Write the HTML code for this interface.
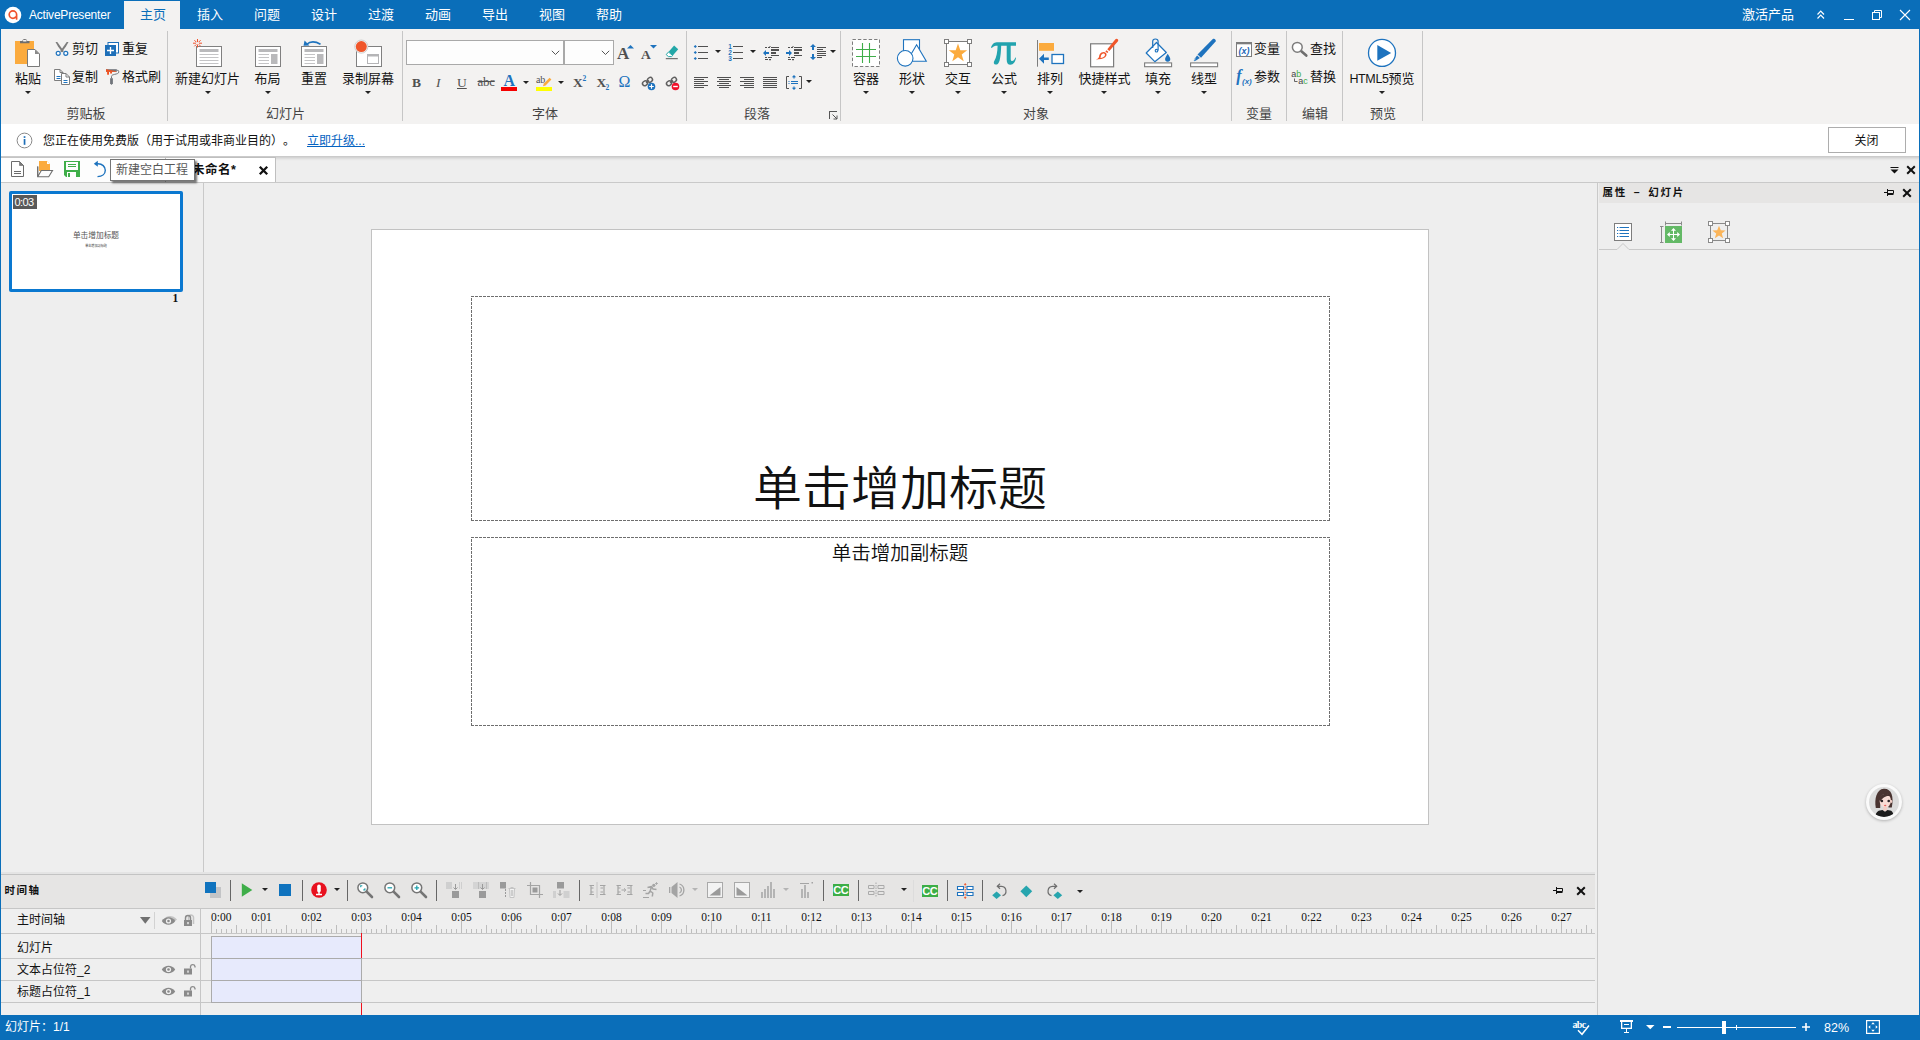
<!DOCTYPE html>
<html lang="zh-CN">
<head>
<meta charset="utf-8">
<title>ActivePresenter</title>
<style>
*{box-sizing:border-box;margin:0;padding:0}
html,body{width:1920px;height:1040px;overflow:hidden;background:#eeeeee}
body{position:relative;font-family:"Liberation Sans","Noto Sans CJK SC",sans-serif;font-size:13px;color:#141414;line-height:1}
.abs,.abs *{position:absolute}
#app{position:absolute;left:0;top:0;width:1920px;height:1040px;overflow:hidden}
.t{position:absolute;white-space:nowrap;line-height:16px;height:16px}
.c{transform:translateX(-50%)}
svg{position:absolute;overflow:visible}
/* title bar */
#titlebar{position:absolute;left:0;top:0;width:1920px;height:29px;background:#0a6eb9}
#titlebar .t{color:#fff}
#tabhome{position:absolute;left:124px;top:1px;width:56px;height:28px;background:#f3f2f1}
/* ribbon */
#ribbon{position:absolute;left:1px;top:29px;width:1918px;height:95px;background:#f3f2f1}
.sep{position:absolute;top:31px;width:1px;height:90px;background:#c6c6c6}
.gl{color:#444}
.arr{position:absolute;width:0;height:0;border-left:3px solid transparent;border-right:3px solid transparent;border-top:3px solid #222}
.sf{font-family:"Liberation Serif","Noto Serif CJK SC",serif}
.dash{background:
 repeating-linear-gradient(90deg,#6e6e6e 0 3px,transparent 3px 4px) 0 0/100% 1px no-repeat,
 repeating-linear-gradient(90deg,#6e6e6e 0 3px,transparent 3px 4px) 0 100%/100% 1px no-repeat,
 repeating-linear-gradient(180deg,#6e6e6e 0 3px,transparent 3px 4px) 0 2px/1px 100% no-repeat,
 repeating-linear-gradient(180deg,#6e6e6e 0 3px,transparent 3px 4px) 100% 2px/1px 100% no-repeat}
.vs{position:absolute;top:880px;width:1px;height:21px;background:#666}
/* info */
#info{position:absolute;left:1px;top:124px;width:1918px;height:32px;background:#fff}
#infoshadow{position:absolute;left:1px;top:156px;width:1918px;height:5px;background:linear-gradient(#cbcbcb 0 1px,#d4d4d4 1px 2px,#dedede 2px 3px,#e7e7e7 3px 4px,#ececec 4px 5px)}
/* borders */
#lb{position:absolute;left:0;top:0;width:1px;height:1040px;background:#0a6eb9}
#rb{position:absolute;left:1919px;top:0;width:1px;height:1040px;background:#0a6eb9}
#status{position:absolute;left:0;top:1015px;width:1920px;height:25px;background:#0a6eb9}
#status .t{color:#fff}
</style>
</head>
<body>
<div id="app">
<!-- TITLE BAR -->
<div id="titlebar">
  <svg style="left:4px;top:6px" width="18" height="18" viewBox="0 0 18 18">
    <circle cx="9" cy="9" r="8.3" fill="#fff"/>
    <path d="M12.6 12.9 V8.6 A3.7 3.7 0 1 0 8.9 12.3 A3.6 3.6 0 0 0 11.6 11.1" fill="none" stroke="#f0522d" stroke-width="1.7" stroke-linecap="round"/>
  </svg>
  <div class="t" style="left:29px;top:7px;font-size:12px;letter-spacing:-0.22px">ActivePresenter</div>
  <div id="tabhome"></div>
  <div class="t" style="left:140px;top:7px;color:#0a6eb9">主页</div>
  <div class="t" style="left:197px;top:7px">插入</div>
  <div class="t" style="left:254px;top:7px">问题</div>
  <div class="t" style="left:311px;top:7px">设计</div>
  <div class="t" style="left:368px;top:7px">过渡</div>
  <div class="t" style="left:425px;top:7px">动画</div>
  <div class="t" style="left:482px;top:7px">导出</div>
  <div class="t" style="left:539px;top:7px">视图</div>
  <div class="t" style="left:596px;top:7px">帮助</div>
  <div class="t" style="left:1742px;top:7px">激活产品</div>
  <svg style="left:1816px;top:9px" width="10" height="11" viewBox="0 0 10 11" fill="none" stroke="#fff" stroke-width="1.2">
    <path d="M1.500 5.500 L4.750 2.200 L8 5.500 M1.500 9.500 L4.750 6.200 L8 9.500"/>
  </svg>
  <div style="position:absolute;left:1844px;top:19px;width:10px;height:1px;background:#fff"></div>
  <svg style="left:1872px;top:10px" width="10" height="10" viewBox="0 0 10 10" fill="none" stroke="#fff" stroke-width="1">
    <rect x="0.5" y="2.5" width="7" height="7"/><path d="M2.5 2.5 V0.5 H9.5 V7.5 H7.5"/>
  </svg>
  <svg style="left:1900px;top:10px" width="10" height="10" viewBox="0 0 10 10" fill="none" stroke="#fff" stroke-width="1.1">
    <path d="M0 0 L10 10 M10 0 L0 10"/>
  </svg>
</div>
<!-- RIBBON -->
<div id="ribbon"></div>
<div id="rib" class="abs" style="left:0;top:0;width:1920px;height:124px">
  <!-- clipboard group -->
  <svg style="left:14px;top:38px" width="28" height="30" viewBox="0 0 28 30">
    <rect x="1" y="3" width="19" height="23" fill="#fbab3e"/>
    <path d="M6 5.300 h9.500 v-2.300 h-2.200 a2.600 2.400 0 0 0 -5.100 0 h-2.200 z" fill="#6e6e6e"/>
    <rect x="8.800" y="1.900" width="3.900" height="1.500" rx="0.750" fill="#f3f2f1"/>
    <path d="M13.500 11.500 h7.500 l4.500 4.500 v12.500 h-12 z" fill="#fff" stroke="#7a7a7a" stroke-width="1"/>
    <path d="M21 11.500 v4.500 h4.500 z" fill="#8a8a8a"/>
  </svg>
  <div class="t c" style="left:28px;top:71px">粘贴</div>
  <div class="arr" style="left:25px;top:91px"></div>

  <svg style="left:55px;top:42px" width="14" height="14" viewBox="0 0 14 14">
    <path d="M0.500 0 L2.300 0 L8.900 9.300 L7.300 10.300 L3 4.500 Z" fill="#7d7d7d"/>
    <path d="M13.500 0 L11.700 0 L5.100 9.300 L6.700 10.300 L11 4.500 Z" fill="#7d7d7d"/>
    <circle cx="3.2" cy="11.3" r="2" fill="#fff" stroke="#1e73be" stroke-width="1.2"/>
    <circle cx="10.8" cy="11.3" r="2" fill="#fff" stroke="#1e73be" stroke-width="1.2"/>
  </svg>
  <div class="t" style="left:72px;top:41px">剪切</div>
  <svg style="left:105px;top:42px" width="14" height="14" viewBox="0 0 14 14">
    <rect x="3" y="0.5" width="10.5" height="10.5" fill="#fff" stroke="#1e6fb8" stroke-width="1"/>
    <rect x="0" y="3" width="11" height="11" fill="#1e6fb8"/>
    <path d="M5.5 5 v7 M2 8.5 h7" stroke="#fff" stroke-width="1.3"/>
  </svg>
  <div class="t" style="left:122px;top:41px">重复</div>
  <svg style="left:54px;top:69px" width="16" height="16" viewBox="0 0 16 16">
    <path d="M0.5 0.5 h5.5 l3 3 v8 h-8.5 z" fill="#fff" stroke="#7d7d7d"/>
    <path d="M6 0.5 v3 h3" fill="none" stroke="#7d7d7d"/>
    <path d="M2.5 7.5 h4 M2.5 9.5 h4" stroke="#1e73be" stroke-width="1"/>
    <path d="M7.5 4.5 h4.5 l3.5 3.5 v7.5 h-8 z" fill="#fff" stroke="#7d7d7d"/>
    <path d="M12 4.5 v3.5 h3.5" fill="none" stroke="#7d7d7d"/>
    <path d="M9.5 11.5 h4 M9.5 13.5 h4" stroke="#1e73be" stroke-width="1"/>
  </svg>
  <div class="t" style="left:72px;top:68.5px">复制</div>
  <svg style="left:106px;top:69px" width="14" height="16" viewBox="0 0 14 16">
    <rect x="0" y="0.200" width="10.800" height="2.600" fill="#70747a"/>
    <path d="M0 0.200 L10.300 2.200 V2.800 H0 Z" fill="#f4511e"/>
    <rect x="1.100" y="2.700" width="1.900" height="3" fill="#f4511e"/><rect x="4.100" y="2.700" width="1.900" height="1.800" fill="#f4511e"/>
    <path d="M10.800 1.400 H11.700 A1 1 0 0 1 12.700 2.400 V3.200 C12.700 4.500 11 4.800 8.500 5.400 C6.500 5.900 5.500 6.300 5.500 7.500 V9.400" fill="none" stroke="#70747a" stroke-width="1"/>
    <path d="M4.100 9.300 H6.900 V14.300 L5.500 15.900 L4.100 14.300 Z" fill="#70747a"/>
  </svg>
  <div class="t" style="left:122px;top:68.5px">格式刷</div>
  <div class="t c gl" style="left:86px;top:106px">剪贴板</div>
  <div class="sep" style="left:167px"></div>

  <!-- slides group -->
  <svg style="left:192px;top:38px" width="32" height="30" viewBox="0 0 32 30">
    <rect x="4.5" y="8.5" width="25" height="20" fill="#fff" stroke="#808080"/>
    <rect x="7.5" y="11" width="19" height="3" fill="#b9b9bb"/>
    <path d="M7.5 16.5 h19 M7.5 19.5 h19 M7.5 22.5 h19 M7.5 25.5 h19" stroke="#c4c4c6" stroke-width="1"/>
    <g stroke="#f0522d" stroke-width="1">
      <path d="M5.5 1 v3 M5.5 6.5 v3 M1 5.2 h3 M7 5.2 h3 M2.4 2.2 l2 2 M6.8 6.4 l1.8 1.8 M8.6 2.2 l-2 2 M4.3 6.4 l-1.9 1.9"/>
    </g>
  </svg>
  <div class="t c" style="left:207.5px;top:71px">新建幻灯片</div>
  <div class="arr" style="left:205px;top:91px"></div>

  <svg style="left:254px;top:38px" width="28" height="30" viewBox="0 0 28 30">
    <rect x="1.5" y="8.5" width="25" height="20" fill="#fff" stroke="#808080"/>
    <rect x="4.5" y="11" width="19" height="3" fill="#b9b9bb"/>
    <path d="M4.5 16.5 h10.5 M4.5 19.5 h10.5 M4.5 22.5 h10.5 M4.5 25.5 h10.5" stroke="#c4c4c6" stroke-width="1"/>
    <rect x="17" y="16" width="6.5" height="10" fill="#b9b9bb"/>
  </svg>
  <div class="t c" style="left:267.5px;top:71px">布局</div>
  <div class="arr" style="left:265px;top:91px"></div>

  <svg style="left:300px;top:38px" width="28" height="30" viewBox="0 0 28 30">
    <rect x="1.5" y="8.5" width="25" height="20" fill="#fff" stroke="#808080"/>
    <rect x="4.5" y="11" width="19" height="3" fill="#b9b9bb"/>
    <path d="M4.5 16.5 h10.5 M4.5 19.5 h10.5 M4.5 22.5 h10.5 M4.5 25.5 h10.5" stroke="#c4c4c6" stroke-width="1"/>
    <rect x="17" y="16" width="6.5" height="10" fill="#b9b9bb"/>
    <path d="M6.5 6.5 Q12 1.5 20.5 6.2" fill="none" stroke="#1e73be" stroke-width="1.6"/>
    <path d="M3.5 7.8 L4.6 2.6 L9.4 7.6 Z" fill="#1e73be"/>
  </svg>
  <div class="t c" style="left:314px;top:71px">重置</div>

  <svg style="left:352px;top:38px" width="32" height="30" viewBox="0 0 32 30">
    <rect x="4.5" y="8.5" width="25" height="20" fill="#fff" stroke="#808080"/>
    <rect x="15.5" y="16.5" width="11" height="9" fill="#fff" stroke="#b5b5b7"/>
    <rect x="15.5" y="16.500" width="11" height="2" fill="#b5b5b7"/>
    <circle cx="9.3" cy="8.6" r="6.6" fill="#f3f2f1" stroke="#c8c8c8" stroke-width="0.8"/>
    <circle cx="9.3" cy="8.6" r="5.5" fill="#f0562a"/>
  </svg>
  <div class="t c" style="left:368px;top:71px">录制屏幕</div>
  <div class="arr" style="left:365px;top:91px"></div>
  <div class="t c gl" style="left:285.5px;top:106px">幻灯片</div>
  <div class="sep" style="left:402px"></div>
  <!-- font group -->
  <div style="left:406px;top:40px;width:158px;height:25px;background:#fdfdfd;border:1px solid #a9a9a9"></div>
  <div style="left:564px;top:40px;width:50px;height:25px;background:#fdfdfd;border:1px solid #a9a9a9"></div>
  <svg style="left:551px;top:50px" width="9" height="6" viewBox="0 0 9 6" fill="none" stroke="#555" stroke-width="1"><path d="M0.8 0.8 L4.5 4.5 L8.2 0.8"/></svg>
  <svg style="left:601px;top:50px" width="9" height="6" viewBox="0 0 9 6" fill="none" stroke="#555" stroke-width="1"><path d="M0.8 0.8 L4.5 4.5 L8.2 0.8"/></svg>
  <div class="t sf" style="left:617px;top:46px;font-size:17px;font-weight:bold;color:#505050">A</div>
  <svg style="left:627px;top:45px" width="7" height="4" viewBox="0 0 7 4"><path d="M0 3.5 L3.5 0 L7 3.5 Z" fill="#1e73be"/></svg>
  <div class="t sf" style="left:641px;top:47px;font-size:13.5px;font-weight:bold;color:#505050">A</div>
  <svg style="left:650px;top:45px" width="7" height="4" viewBox="0 0 7 4"><path d="M0 0 L7 0 L3.5 3.5 Z" fill="#1e73be"/></svg>
  <svg style="left:665px;top:45px" width="15" height="15" viewBox="0 0 15 15">
    <path d="M7.5 1.2 L11.6 4.9 L6.2 11 L2.1 7.3 Z" fill="#22a7a7" transform="translate(1.6,-0.6)"/>
    <path d="M3.5 7 L1.2 9.6 L3.4 11.6 H6.5 L7.7 10.6 Z" fill="#fff" stroke="#22a7a7" stroke-width="1"/>
    <path d="M0.8 13.7 H12.8" stroke="#555" stroke-width="1"/>
  </svg>

  <div class="t sf" style="left:412px;top:75px;font-size:13.5px;font-weight:bold;color:#505050">B</div>
  <div class="t sf" style="left:436px;top:75px;font-size:13.5px;font-style:italic;color:#505050">I</div>
  <div class="t sf" style="left:457px;top:75px;font-size:13.5px;color:#505050;text-decoration:underline;text-underline-offset:1px">U</div>
  <div class="t sf" style="left:477.5px;top:74px;font-size:13px;color:#505050;text-decoration:line-through;letter-spacing:-0.3px">abc</div>
  <div class="t sf" style="left:503.500px;top:73px;font-size:16px;font-weight:bold;color:#1e73be">A</div>
  <div style="left:501px;top:87px;width:16px;height:4px;background:#f50000"></div>
  <div class="arr" style="left:523px;top:81px"></div>
  <div class="t sf" style="left:536px;top:71.500px;font-size:10px;color:#505050;letter-spacing:-0.3px">ab</div>
  <svg style="left:542px;top:77px" width="10" height="10" viewBox="0 0 10 10"><path d="M1 9.2 L1.8 6.6 L7.6 0.8 L9.4 2.6 L3.6 8.4 Z" fill="#fbab3e"/></svg>
  <div style="left:536px;top:87px;width:16px;height:4px;background:#ffff00"></div>
  <div class="arr" style="left:558px;top:81px"></div>
  <div class="t sf" style="left:573px;top:75px;font-size:13.5px;font-weight:bold;color:#505050">X</div>
  <div class="t sf" style="left:582.5px;top:71px;font-size:7.5px;font-weight:bold;color:#1e73be">2</div>
  <div class="t sf" style="left:596.5px;top:75px;font-size:13.5px;font-weight:bold;color:#505050">X</div>
  <div class="t sf" style="left:605.5px;top:79.500px;font-size:7.5px;font-weight:bold;color:#1e73be">2</div>
  <div class="t sf" style="left:618.5px;top:74px;font-size:16px;color:#1e73be">Ω</div>
  <svg style="left:641px;top:76px" width="15" height="15" viewBox="0 0 15 15">
    <g fill="none" stroke="#606060" stroke-width="1.5"><ellipse cx="4" cy="7.3" rx="2.6" ry="2.2" transform="rotate(-35 4 7.3)"/><ellipse cx="9" cy="3.8" rx="2.6" ry="2.2" transform="rotate(-35 9 3.8)"/><path d="M5 6.6 L8 4.5"/></g>
    <circle cx="10.5" cy="10.5" r="3.8" fill="#1e73be"/><path d="M10.5 8.2 v4.6 M8.2 10.5 h4.6" stroke="#fff" stroke-width="1.2"/>
  </svg>
  <svg style="left:665px;top:76px" width="15" height="15" viewBox="0 0 15 15">
    <g fill="none" stroke="#606060" stroke-width="1.5"><ellipse cx="4" cy="7.3" rx="2.6" ry="2.2" transform="rotate(-35 4 7.3)"/><ellipse cx="9" cy="3.8" rx="2.6" ry="2.2" transform="rotate(-35 9 3.8)"/><path d="M5 6.6 L8 4.5"/></g>
    <circle cx="10.5" cy="10.5" r="3.8" fill="#f0102a"/><path d="M8.2 10.5 h4.6" stroke="#fff" stroke-width="1.4"/>
  </svg>
  <div class="t c gl" style="left:545px;top:106px">字体</div>
  <div class="sep" style="left:686px"></div>

  <!-- paragraph group -->
  <svg style="left:693px;top:44px" width="16" height="17" viewBox="0 0 16 17">
    <path d="M5 2.5 h10 M5 8.5 h10 M5 14.5 h10" stroke="#505050" stroke-width="1"/>
    <path d="M2.3 0.9 l1.6 1.6 l-1.6 1.6 l-1.6 -1.6 z M2.3 6.9 l1.6 1.6 l-1.6 1.6 l-1.6 -1.6 z M2.3 12.9 l1.6 1.6 l-1.6 1.6 l-1.6 -1.6 z" fill="#1e73be"/>
  </svg>
  <div class="arr" style="left:715px;top:50px"></div>
  <svg style="left:728px;top:44px" width="16" height="17" viewBox="0 0 16 17">
    <path d="M5 2.5 h10 M5 8.5 h10 M5 14.5 h10" stroke="#505050" stroke-width="1"/>
    <g font-family="Liberation Sans, sans-serif" font-size="6.5" font-weight="bold" fill="#1e73be"><text x="0.3" y="4.8">1</text><text x="0.3" y="10.8">2</text><text x="0.3" y="16.6">3</text></g>
  </svg>
  <div class="arr" style="left:750px;top:50px"></div>
  <svg style="left:763px;top:45px" width="17" height="17" viewBox="0 0 17 17">
    <path d="M2 2.500 h2 M5 2.500 h2 M8 2.500 h8 M2 12.500 h2 M5 12.500 h4 M2 14.500 h3 M6 14.500 h2" stroke="#505050" stroke-width="1"/>
    <path d="M8 5 h8 M8 8 h5" stroke="#505050" stroke-width="2"/>
    <path d="M8 10.500 h8" stroke="#505050" stroke-width="1"/>
    <path d="M7 1 v1 M7 14 v1.500" stroke="#505050" stroke-width="1"/>
    <path d="M0 8 L3 5 V7 H6 V9 H3 V11 Z" fill="#1e73be"/>
  </svg>
  <svg style="left:786px;top:45px" width="17" height="17" viewBox="0 0 17 17">
    <path d="M2 2.500 h2 M5 2.500 h2 M8 2.500 h8 M2 12.500 h2 M5 12.500 h4 M2 14.500 h3 M6 14.500 h2" stroke="#505050" stroke-width="1"/>
    <path d="M8 5 h8 M8 8 h5" stroke="#505050" stroke-width="2"/>
    <path d="M8 10.500 h8" stroke="#505050" stroke-width="1"/>
    <path d="M7 1 v1 M7 14 v1.500" stroke="#505050" stroke-width="1"/>
    <path d="M6 8 L3 5 V7 H0 V9 H3 V11 Z" fill="#1e73be"/>
  </svg>
  <svg style="left:810px;top:44px" width="17" height="17" viewBox="0 0 17 17">
    <path d="M7 3.500 h9 M7 5.500 h6 M7 7.500 h9 M7 9.500 h9 M7 11.500 h9 M7 13.500 h5" stroke="#505050" stroke-width="1"/>
    <path d="M3 0 L6 3 H4 V6 H2 V3 H0 Z M3 16 L6 13 H4 V10 H2 V13 H0 Z" fill="#1e73be"/>
  </svg>
  <div class="arr" style="left:830px;top:50px"></div>

  <svg style="left:694px;top:77px" width="14" height="11" viewBox="0 0 14 11"><path d="M0 0.500 h14 M0 2.500 h10 M0 4.500 h14 M0 6.500 h10 M0 8.500 h14 M0 10.500 h10" stroke="#505050" stroke-width="1"/></svg>
  <svg style="left:717px;top:77px" width="14" height="11" viewBox="0 0 14 11"><path d="M0 0.500 h14 M2 2.500 h10 M0 4.500 h14 M2 6.500 h10 M0 8.500 h14 M2 10.500 h10" stroke="#505050" stroke-width="1"/></svg>
  <svg style="left:740px;top:77px" width="14" height="11" viewBox="0 0 14 11"><path d="M0 0.500 h14 M4 2.500 h10 M0 4.500 h14 M4 6.500 h10 M0 8.500 h14 M4 10.500 h10" stroke="#505050" stroke-width="1"/></svg>
  <svg style="left:763px;top:77px" width="14" height="11" viewBox="0 0 14 11"><path d="M0 0.500 h14 M0 2.500 h14 M0 4.500 h14 M0 6.500 h14 M0 8.500 h14 M0 10.500 h14" stroke="#505050" stroke-width="1"/></svg>
  <svg style="left:786px;top:74px" width="16" height="17" viewBox="0 0 16 17">
    <path d="M3 2.500 H0.500 V14.500 H3 M13 2.500 H15.500 V14.500 H13" fill="none" stroke="#505050" stroke-width="1"/>
    <path d="M5 7.500 h7 M5 9.500 h7 M2.500 7.500 h1 M2.500 9.500 h1" stroke="#1e73be" stroke-width="1"/>
    <path d="M8 1 L10.200 3.300 H8.600 V4.500 H7.400 V3.300 H5.800 Z M8 16 L10.200 13.700 H8.600 V12.500 H7.400 V13.700 H5.800 Z" fill="#1e73be"/>
  </svg>
  <div class="arr" style="left:806px;top:80px"></div>
  <div class="t c gl" style="left:757px;top:106px">段落</div>
  <svg style="left:829px;top:111px" width="9" height="9" viewBox="0 0 9 9" fill="none" stroke="#555" stroke-width="1"><path d="M0.500 3 V0.500 H3 M3.500 3.500 L8 8 M8 4.500 V8 H4.500"/><path d="M0.500 0.500 H8 M0.500 0.500 V8" stroke-width="1"/></svg>
  <div class="sep" style="left:840px"></div>
  <!-- object group -->
  <svg style="left:852px;top:39px" width="28" height="28" viewBox="0 0 28 28">
    <rect x="0.5" y="0.5" width="27" height="27" fill="#fff" stroke="#7d7d7d" stroke-width="1" stroke-dasharray="3.4 2"/>
    <path d="M10.500 4 v20 M17.500 4 v20 M4 10.500 h20 M4 17.500 h20" stroke="#3fae49" stroke-width="1.1"/>
  </svg>
  <div class="t c" style="left:866px;top:71px">容器</div>
  <div class="arr" style="left:863px;top:91px"></div>

  <svg style="left:896px;top:39px" width="32" height="28" viewBox="0 0 32 28">
    <rect x="7.5" y="0.7" width="16" height="14" fill="#fff" stroke="#1e73be" stroke-width="1.1"/>
    <path d="M20.600 5.800 L30.300 22.200 H11 Z" fill="#fff" stroke="#1e73be" stroke-width="1.1" stroke-linejoin="miter"/>
    <circle cx="9.200" cy="19.300" r="7.800" fill="#fff" stroke="#1e73be" stroke-width="1.1"/>
  </svg>
  <div class="t c" style="left:912px;top:71px">形状</div>
  <div class="arr" style="left:909px;top:91px"></div>

  <svg style="left:944px;top:39px" width="28" height="28" viewBox="0 0 28 28">
    <rect x="2.5" y="2.5" width="23" height="23" fill="#fff" stroke="#7d7d7d" stroke-width="1"/>
    <g fill="#fff" stroke="#7d7d7d" stroke-width="1"><rect x="0.5" y="0.5" width="4" height="4"/><rect x="23.500" y="0.5" width="4" height="4"/><rect x="0.5" y="23.500" width="4" height="4"/><rect x="23.500" y="23.500" width="4" height="4"/></g>
    <path d="M14 4.600 L16.300 11.200 L23.200 11.300 L17.700 15.500 L19.700 22.200 L14 18.200 L8.300 22.200 L10.300 15.500 L4.800 11.300 L11.700 11.200 Z" fill="#fbab3e"/>
  </svg>
  <div class="t c" style="left:958px;top:71px">交互</div>
  <div class="arr" style="left:955px;top:91px"></div>

  <svg style="left:990px;top:39px" width="28" height="28" viewBox="0 0 28 28">
    <path d="M1 8.500 C2.500 4.500 4.500 3.300 8 3.300 H26 V6.700 H20.700 V20 C20.700 22.200 22.300 22.700 23.800 21.300 C24.500 20.600 25 19.600 25.300 18.600 L26 18.800 C25.500 23 23.300 25.700 20.500 25.700 C17.800 25.700 16.700 23.700 16.700 20.700 V6.700 H11.200 C11 12 10.600 17.500 9.600 21.500 C8.800 24.600 7.200 25.800 5.600 25.600 C3.700 25.400 3.300 23.400 4.400 21.700 C6.400 18.500 7.500 13 7.600 6.700 C4.800 6.700 3.300 7.200 1.800 9 Z" fill="#22a3ae"/>
  </svg>
  <div class="t c" style="left:1004px;top:71px">公式</div>
  <div class="arr" style="left:1001px;top:91px"></div>

  <svg style="left:1036px;top:39px" width="29" height="28" viewBox="0 0 29 28">
    <path d="M1.500 1 V27.700" stroke="#7d7d7d" stroke-width="1"/>
    <rect x="3" y="4" width="15" height="7.800" fill="#fbab3e"/>
    <rect x="16" y="15.500" width="11.500" height="9" fill="#fff" stroke="#1e73be" stroke-width="1.3"/>
    <path d="M3 19.700 L8 14.700 V18.400 H12.800 V21 H8 V24.700 Z" fill="#1e73be"/>
  </svg>
  <div class="t c" style="left:1050px;top:71px">排列</div>
  <div class="arr" style="left:1047px;top:91px"></div>

  <svg style="left:1089px;top:38px" width="30" height="30" viewBox="0 0 30 30">
    <rect x="1.600" y="5.800" width="23" height="23" fill="#fff" stroke="#7d7d7d" stroke-width="1.200"/>
    <path d="M27.500 0.800 C28.700 0.800 29.800 2 29 3.200 L20.300 13 L18.300 11.200 L26.200 1.400 C26.500 1 27 0.800 27.500 0.800 Z" fill="#f0562a"/>
    <path d="M17.500 12.200 L19.400 13.900 L18.300 15.100 L16.400 13.400 Z" fill="#f0562a"/>
    <path d="M15.600 14.200 C17.300 14.600 18 16.200 17.300 17.800 C16.300 20.200 13 21.300 9.300 21.200 C8.700 21.200 7.800 21.800 7.300 22.200 C8 20.900 9.300 20.400 9.800 19.500 C10.300 18.500 10 17.500 10.800 16.300 C11.800 14.800 13.800 13.800 15.600 14.200 Z M14.900 15.600 C13.800 15.600 12.600 16.200 12.100 17.300 C11.700 18.200 12 19.200 11.500 20 C13.400 19.900 15.300 19 15.900 17.500 C16.200 16.700 15.800 15.600 14.900 15.600 Z" fill="#f0562a" fill-rule="evenodd"/>
  </svg>
  <div class="t c" style="left:1104.500px;top:71px">快捷样式</div>
  <div class="arr" style="left:1101px;top:91px"></div>

  <svg style="left:1144px;top:38px" width="29" height="30" viewBox="0 0 29 30">
    <rect x="0.600" y="24.900" width="27" height="3.800" fill="#fff" stroke="#7d7d7d" stroke-width="1.100"/>
    <path d="M12.500 4.500 L22.300 14.500 L10.800 23.700 L2.200 15 Z" fill="#fff" stroke="#1e73be" stroke-width="1.200" stroke-linejoin="round"/>
    <path d="M8.700 10 V3.300 A2.700 2.300 0 0 1 14.100 3.300 V12.500" fill="none" stroke="#1e73be" stroke-width="1.200"/>
    <circle cx="12.500" cy="12.700" r="1.300" fill="#fff" stroke="#1e73be" stroke-width="1.100"/>
    <path d="M23.700 15.800 C25 18 26.300 19.600 26.300 21.100 A2.600 2.600 0 0 1 21.100 21.100 C21.100 19.600 22.400 18 23.700 15.800 Z" fill="#1e73be"/>
  </svg>
  <div class="t c" style="left:1158px;top:71px">填充</div>
  <div class="arr" style="left:1155px;top:91px"></div>

  <svg style="left:1190px;top:38px" width="29" height="30" viewBox="0 0 29 30">
    <rect x="0.600" y="24.900" width="27" height="3.800" fill="#fff" stroke="#7d7d7d" stroke-width="1.100"/>
    <path d="M22.800 1 C24.200 -0.200 26.600 2 25.600 3.500 L11 19.700 L7.500 16.500 Z" fill="#1e73be"/>
    <path d="M7.100 17.600 L9.900 20.100 L6 22.600 L4.300 23.300 L3.600 22.600 L4.600 20.800 Z" fill="#1e73be"/>
    <path d="M5.500 20.600 L3.700 22.800" stroke="#fff" stroke-width="0.700"/>
  </svg>
  <div class="t c" style="left:1204px;top:71px">线型</div>
  <div class="arr" style="left:1201px;top:91px"></div>
  <div class="t c gl" style="left:1036px;top:106px">对象</div>
  <div class="sep" style="left:1231px"></div>

  <!-- variables -->
  <svg style="left:1236px;top:42px" width="16" height="15" viewBox="0 0 16 15">
    <rect x="0.500" y="0.500" width="15" height="14" fill="#fff" stroke="#7d7d7d"/>
    <rect x="0" y="0" width="16" height="2.300" fill="#7d7d7d"/>
    <text x="8" y="12" text-anchor="middle" font-family="Liberation Sans, sans-serif" font-style="italic" font-weight="bold" font-size="9" fill="#2668b8">(x)</text>
  </svg>
  <div class="t" style="left:1254px;top:41px">变量</div>
  <svg style="left:1235px;top:68px" width="18" height="18" viewBox="0 0 18 18">
    <text x="1.200" y="12.700" font-family="Liberation Serif, serif" font-style="italic" font-weight="bold" font-size="16" fill="#1e73be">f</text>
    <text x="7" y="15.500" font-family="Liberation Sans, sans-serif" font-style="italic" font-weight="bold" font-size="8" fill="#1e73be">(x)</text>
  </svg>
  <div class="t" style="left:1254px;top:69px">参数</div>
  <div class="t c gl" style="left:1259px;top:106px">变量</div>
  <div class="sep" style="left:1286px"></div>

  <!-- edit -->
  <svg style="left:1291px;top:41px" width="17" height="17" viewBox="0 0 17 17">
    <path d="M9.800 9.800 L15.300 14.600" stroke="#6e6e6e" stroke-width="2.600" stroke-linecap="round"/>
    <circle cx="6.300" cy="6.300" r="4.900" fill="#fff" stroke="#7d7d7d" stroke-width="1.500"/>
  </svg>
  <div class="t" style="left:1310px;top:41px">查找</div>
  <svg style="left:1291px;top:70px" width="18" height="16" viewBox="0 0 18 16">
    <g font-family="Liberation Sans, sans-serif" font-size="9">
      <text x="0.300" y="6.500" fill="#444">a</text><text x="5.200" y="6.500" fill="#3fae49">b</text>
      <text x="7.300" y="13.800" fill="#444">a</text><text x="12.300" y="13.800" fill="#3fae49">c</text>
    </g>
    <path d="M3.500 8.500 V11.500 H6.500" fill="none" stroke="#555" stroke-width="0.900"/>
  </svg>
  <div class="t" style="left:1310px;top:69px">替换</div>
  <div class="t c gl" style="left:1315px;top:106px">编辑</div>
  <div class="sep" style="left:1342px"></div>

  <!-- preview -->
  <svg style="left:1367px;top:38px" width="30" height="30" viewBox="0 0 30 30">
    <circle cx="15" cy="14.900" r="13.500" fill="#fff" stroke="#1e73be" stroke-width="1.300"/>
    <path d="M10.300 7 L24.200 14.900 L10.300 22.800 Z" fill="#1e73be"/>
  </svg>
  <div class="t c" style="left:1382px;top:71px"><span style="position:static;font-size:12.5px;letter-spacing:-0.35px">HTML5</span>预览</div>
  <div class="arr" style="left:1379px;top:91px"></div>
  <div class="t c gl" style="left:1383px;top:106px">预览</div>
  <div class="sep" style="left:1422px"></div>
</div>
<!-- INFO BAR -->
<div id="info"></div>
<div id="infoshadow"></div>
<div class="abs" style="left:0;top:0;width:1920px;height:190px">
  <svg style="left:16px;top:132px" width="17" height="17" viewBox="0 0 17 17">
    <circle cx="8.500" cy="8.500" r="7.400" fill="#fff" stroke="#8a8a8a" stroke-width="1"/>
    <rect x="7.700" y="7" width="1.700" height="5.800" fill="#1e6fb8"/><rect x="7.700" y="4.200" width="1.700" height="1.700" fill="#1e6fb8"/>
  </svg>
  <div class="t" style="left:43px;top:133px;font-size:12px;color:#111;text-spacing-trim:space-all;font-kerning:none">您正在使用免费版（用于试用或非商业目的）。</div>
  <div class="t" style="left:307px;top:133px;font-size:12px;color:#0563c1;text-decoration:underline">立即升级...</div>
  <div style="left:1828px;top:127px;width:78px;height:26px;background:#fff;border:1px solid #adadad"></div>
  <div class="t c" style="left:1866.500px;top:133px;font-size:12px;color:#111">关闭</div>
</div>

<!-- TOOLBAR / DOC TAB ROW -->
<div class="abs" style="left:1px;top:159px;width:1918px;height:24px;border-bottom:1px solid #c9c9c9"></div>
<div class="abs" style="left:1px;top:157px;width:164px;height:25px;background:#fdfdfd;border-top:1px solid #c4c4c4"></div>
<div class="abs" style="left:165px;top:157px;width:111px;height:25px;background:#fff;border:1px solid #bfbfbf;border-bottom:none"></div>
<div class="abs" style="left:0;top:0;width:1920px;height:190px">
  <div class="t" style="left:192px;top:161.500px;font-size:12.500px;letter-spacing:0.500px;font-weight:bold;color:#111">未命名*</div>
  <svg style="left:259px;top:166px" width="9" height="9" viewBox="0 0 9 9"><path d="M0.800 0.800 L8.200 8.200 M8.200 0.800 L0.800 8.200" stroke="#111" stroke-width="2.300"/></svg>
  <!-- new -->
  <svg style="left:10px;top:160px" width="15" height="18" viewBox="0 0 15 18">
    <path d="M1.500 1.500 H9.500 L13.500 5.500 V16.500 H1.500 Z" fill="#fdfdfd" stroke="#6a6a6a" stroke-width="1"/>
    <path d="M9.500 1.500 V5.500 H13.500 Z" fill="#7a7a7a" stroke="#6a6a6a" stroke-width="0.600"/>
    <path d="M4 11.500 H11 M4 13.500 H11" stroke="#6a6a6a" stroke-width="1"/>
  </svg>
  <!-- open -->
  <svg style="left:36px;top:160px" width="18" height="18" viewBox="0 0 18 18">
    <path d="M3 1 H11 L14 4 V11 H3 Z" fill="#fbab3e"/>
    <path d="M11 1 V4 H14 Z" fill="#fff"/>
    <path d="M1.700 6.500 V16.700 H12.700 L16.500 10.500 H5.300 L1.700 16.700" fill="#fdfdfd" stroke="#6f6f6f" stroke-width="1.100" stroke-linejoin="miter"/>
    <path d="M1.700 6.500 V16.700" stroke="#6f6f6f" stroke-width="1.100"/>
  </svg>
  <!-- save -->
  <svg style="left:64px;top:161px" width="16" height="16" viewBox="0 0 16 16">
    <path d="M0 0 H16 V16 H2 L0 14 Z" fill="#3fae49"/>
    <rect x="2" y="1" width="12" height="8" fill="#fdfdfd"/>
    <rect x="4" y="3" width="8" height="1" fill="#3fae49"/><rect x="4" y="5" width="8" height="1" fill="#3fae49"/>
    <rect x="3" y="11" width="9" height="5" fill="#fdfdfd"/>
    <rect x="4" y="12" width="2" height="4" fill="#3fae49"/>
  </svg>
  <!-- undo -->
  <svg style="left:93px;top:160px" width="14" height="18" viewBox="0 0 14 18">
    <path d="M4 3.800 C9.500 3.300 12.300 7 12.300 10.300 C12.300 13.800 9.300 16.500 4.500 16.600" fill="none" stroke="#1e73be" stroke-width="1.400"/>
    <path d="M0.800 3.800 L4.800 0.800 V6.800 Z" fill="#1e73be"/>
  </svg>
  <!-- right controls -->
  <svg style="left:1890px;top:167px" width="9" height="7" viewBox="0 0 9 7"><path d="M0.500 0.500 H8.500" stroke="#111" stroke-width="1"/><path d="M0.500 2.500 H8.500 L4.500 6.500 Z" fill="#111"/></svg>
  <svg style="left:1906px;top:165px" width="10" height="10" viewBox="0 0 10 10"><path d="M1.200 1.200 L8.800 8.800 M8.800 1.200 L1.200 8.800" stroke="#111" stroke-width="2"/></svg>
</div>
<!-- tooltip -->
<div class="abs" style="left:110px;top:159px;width:85px;height:22px;background:#fff;border:1px solid #767676;box-shadow:2px 2px 2px rgba(0,0,0,0.55)"></div>
<div class="t" style="left:116px;top:162px;font-size:12px;color:#575757">新建空白工程</div>

<!-- LEFT PANEL -->
<div class="abs" style="left:203px;top:183px;width:1px;height:689px;background:#c9c9c9"></div>
<div class="abs" style="left:9px;top:191px;width:174px;height:101px;background:#fff;border:3px solid #0a78d0;border-radius:2px"></div>
<div class="abs" style="left:13px;top:195px;width:24px;height:14px;background:#595959"></div>
<div class="t" style="left:14.500px;top:194px;font-size:11px;color:#fff;letter-spacing:-0.6px">0:03</div>
<div class="t c" style="left:96px;top:228px;font-size:7.700px;color:#555">单击增加标题</div>
<div class="t c" style="left:96px;top:238px;font-size:3.100px;color:#333">单击增加副标题</div>
<div class="t sf" style="left:172.500px;top:290px;font-size:11.500px;font-weight:bold;color:#111">1</div>

<!-- CANVAS -->
<div class="abs" style="left:371px;top:229px;width:1058px;height:596px;background:#fff;border:1px solid #c2c2c2"></div>
<div class="abs dash" style="left:471px;top:296px;width:859px;height:225px"></div>
<div class="abs dash" style="left:471px;top:537px;width:859px;height:189px"></div>
<div class="t" id="ttl" style="left:700px;width:400px;text-align:center;top:454px;font-size:49px;line-height:70px;height:70px;color:#111;font-weight:350;transform:scaleY(0.94);transform-origin:50% 50%">单击增加标题</div>
<div class="t c" id="sub" style="left:900px;top:539px;font-size:19.500px;line-height:28px;height:28px;color:#111;font-weight:350">单击增加副标题</div>

<!-- RIGHT PANEL -->
<div class="abs" style="left:1597px;top:183px;width:1px;height:832px;background:#c9c9c9"></div>
<div class="abs" style="left:1599px;top:183px;width:320px;height:20px;background:#e6e5e4"></div>
<div class="t" style="left:1602.500px;top:184px;font-size:10.500px;font-weight:bold;color:#111;letter-spacing:1.750px;word-spacing:2.200px">属性 – 幻灯片</div>
<div class="abs" style="left:0;top:0;width:1920px;height:260px">
  <svg style="left:1884px;top:188px" width="10" height="9" viewBox="0 0 10 9"><path d="M0 4.500 H3.500 M3.500 1 V8 M3.500 2.500 H9.500 V5.500 H3.500 M3.500 6.500 H9.500" fill="none" stroke="#111" stroke-width="1"/></svg>
  <svg style="left:1902px;top:188px" width="10" height="10" viewBox="0 0 10 10"><path d="M1.200 1.200 L8.800 8.800 M8.800 1.200 L1.200 8.800" stroke="#111" stroke-width="2"/></svg>
  <!-- prop tab icons -->
  <svg style="left:1614px;top:223px" width="18" height="18" viewBox="0 0 18 18">
    <rect x="0.500" y="0.500" width="17" height="17" fill="#fff" stroke="#7d7d7d"/>
    <path d="M5.500 4.500 H15 M5.500 7.500 H15 M5.500 10.500 H15 M5.500 13.500 H15 M3 4.500 H4.200 M3 7.500 H4.200 M3 10.500 H4.200 M3 13.500 H4.200" stroke="#1e73be" stroke-width="1"/>
  </svg>
  <svg style="left:1660px;top:220px" width="23" height="24" viewBox="0 0 23 24">
    <rect x="5" y="6" width="17" height="17" fill="#63b966"/>
    <path d="M5 3.500 H22 M5.500 1.500 V5.500 M21.500 1.500 V5.500 M1.500 6 V23 M0 6.500 H3.500 M0 22.500 H3.500" stroke="#8a8a8a" stroke-width="1"/>
    <g fill="#fff"><path d="M13.500 8 L16 10.800 H11 Z M13.500 21 L16 18.200 H11 Z M7 14.500 L9.800 12 V17 Z M20 14.500 L17.200 12 V17 Z"/><rect x="13" y="10" width="1" height="9"/><rect x="9" y="14" width="9" height="1"/></g>
  </svg>
  <svg style="left:1708px;top:221px" width="23" height="23" viewBox="0 0 23 23">
    <rect x="2.500" y="2.500" width="17" height="17" fill="none" stroke="#8a8a8a"/>
    <g fill="#fff" stroke="#8a8a8a"><rect x="0.500" y="0.500" width="4" height="4"/><rect x="17.500" y="0.500" width="4" height="4"/><rect x="0.500" y="17.500" width="4" height="4"/><rect x="17.500" y="17.500" width="4" height="4"/></g>
    <path d="M11 4.800 L12.800 9.300 L17.600 9.500 L13.800 12.500 L15.100 17.200 L11 14.500 L6.900 17.200 L8.200 12.500 L4.400 9.500 L9.200 9.300 Z" fill="#fbb55a"/>
  </svg>
  <svg style="left:1598px;top:242px" width="321" height="9" viewBox="0 0 321 9"><path d="M1 7.500 H19 L25 1.500 L31 7.500 H321" fill="none" stroke="#c9c9c9" stroke-width="1"/></svg>
</div>
<!-- avatar -->
<div class="abs" style="left:1866px;top:784px;width:36px;height:36px;border-radius:50%;background:#fafafa;box-shadow:0 1px 3px rgba(0,0,0,0.25)"></div>
<svg style="left:1869px;top:787px" width="30" height="30" viewBox="0 0 30 30">
  <defs><clipPath id="avc"><circle cx="15" cy="15" r="15"/></clipPath></defs>
  <circle cx="15" cy="15" r="15" fill="#dcdcdc"/>
  <g clip-path="url(#avc)">
    <path d="M6.800 21 C5.300 12 7.500 2.300 14.800 1.800 C22.500 1.500 25 9.500 22.800 20.500 L19.500 20.500 L18.500 9 L11.500 10 L11.200 21 Z" fill="#4a3431"/>
    <ellipse cx="16.300" cy="13.800" rx="5.700" ry="6.700" fill="#f9dcd5"/>
    <ellipse cx="22.300" cy="14.500" rx="0.900" ry="1.400" fill="#f3cfc6"/>
    <path d="M10 12.500 C11.500 6.500 17 4.800 22.300 9.300 C19 8.300 14.500 8.800 11.200 14.500 Z" fill="#4a3431"/>
    <rect x="14.300" y="19.800" width="3.800" height="4" fill="#f3cfc6"/>
    <path d="M6.500 30 C6.500 24.500 10 23.200 13.500 23 L16 24.800 L18.500 23 C22.500 23.200 24.500 24.500 24.500 30 Z" fill="#1c1c1c"/>
    <ellipse cx="12.900" cy="14" rx="1.300" ry="1.200" fill="#2a2225"/><ellipse cx="19.700" cy="14" rx="1.300" ry="1.200" fill="#2a2225"/>
    <ellipse cx="16.200" cy="18.500" rx="1.200" ry="0.700" fill="#e8625f"/>
  </g>
</svg>
<!-- TIMELINE -->
<div class="abs" style="left:1px;top:872px;width:1594px;height:2px;background:#e4e4e4"></div>
<div class="abs" style="left:1px;top:874px;width:1594px;height:1px;background:#c3c3c3"></div>
<div class="abs" style="left:1px;top:875px;width:1594px;height:33px;background:#e6e5e4"></div>
<div class="abs" style="left:1px;top:908px;width:1594px;height:1px;background:#c6c6c6"></div>
<div class="abs" style="left:1px;top:909px;width:1594px;height:106px;background:#efefef"></div>
<div class="t" style="left:4.500px;top:882px;font-size:10.500px;font-weight:bold;color:#111;letter-spacing:1.500px">时间轴</div>
<div id="tl" class="abs" style="left:0;top:0;width:1600px;height:1015px">
  <!-- layers icon -->
  <div style="left:210px;top:887px;width:11px;height:11px;background:#c3c4c6"></div>
  <div style="left:205px;top:882px;width:11px;height:11px;background:#1073be"></div>
  <div class="vs" style="left:230px"></div>
  <svg style="left:241px;top:883px" width="12" height="14" viewBox="0 0 12 14"><path d="M0.800 0.300 L11.300 7 L0.800 13.700 Z" fill="#3fae49"/></svg>
  <div class="arr" style="left:262px;top:888px"></div>
  <div style="left:279px;top:884px;width:12px;height:12px;background:#1073be"></div>
  <div class="vs" style="left:302px"></div>
  <svg style="left:311px;top:882px" width="16" height="16" viewBox="0 0 16 16">
    <circle cx="8" cy="8" r="7.800" fill="#e8101e"/>
    <rect x="6.200" y="2.500" width="3.600" height="8" rx="1.800" fill="#fff"/>
    <path d="M5 12.500 H11" stroke="#fff" stroke-width="1.500"/><rect x="7.300" y="10" width="1.400" height="2.500" fill="#fff"/>
  </svg>
  <div class="arr" style="left:334px;top:888px"></div>
  <div class="vs" style="left:347px"></div>
  <!-- zoom icons -->
  <svg style="left:357px;top:882px" width="17" height="17" viewBox="0 0 17 17">
    <path d="M9.600 9.600 L15 15" stroke="#757575" stroke-width="2.600" stroke-linecap="round"/>
    <circle cx="5.800" cy="5.800" r="4.900" fill="#fff" stroke="#757575" stroke-width="1.500"/>
    <path d="M3.700 5.300 V3.700 H5.300 M6.300 7.900 H7.900 V6.300" fill="none" stroke="#22a3ae" stroke-width="1.100"/>
  </svg>
  <svg style="left:384px;top:882px" width="17" height="17" viewBox="0 0 17 17">
    <path d="M9.600 9.600 L15 15" stroke="#757575" stroke-width="2.600" stroke-linecap="round"/>
    <circle cx="5.800" cy="5.800" r="4.900" fill="#fff" stroke="#757575" stroke-width="1.500"/>
    <path d="M3.500 5.800 H8.100" stroke="#22a3ae" stroke-width="1.300"/>
  </svg>
  <svg style="left:411px;top:882px" width="17" height="17" viewBox="0 0 17 17">
    <path d="M9.600 9.600 L15 15" stroke="#757575" stroke-width="2.600" stroke-linecap="round"/>
    <circle cx="5.800" cy="5.800" r="4.900" fill="#fff" stroke="#757575" stroke-width="1.500"/>
    <path d="M3.500 5.800 H8.100 M5.800 3.500 V8.100" stroke="#22a3ae" stroke-width="1.300"/>
  </svg>
  <div class="vs" style="left:436px"></div>
  <!-- disabled icons -->
  <svg style="left:446px;top:882px" width="16" height="16" viewBox="0 0 16 16">
    <rect x="0" y="0" width="6" height="7" fill="#cfcfcf"/><rect x="13" y="0" width="1" height="7" fill="#cfcfcf"/><rect x="15" y="0" width="1" height="7" fill="#cfcfcf"/>
    <path d="M9.500 2 V7 M7.500 5.500 L9.500 7.500 L11.500 5.500" fill="none" stroke="#9a9a9a" stroke-width="1"/>
    <rect x="6" y="9" width="7" height="7" fill="#9a9a9a"/>
  </svg>
  <svg style="left:473px;top:882px" width="16" height="16" viewBox="0 0 16 16">
    <rect x="0" y="0" width="16" height="7" fill="#d4d4d4"/><rect x="5" y="0" width="1" height="7" fill="#bcbcbc"/><rect x="13" y="0" width="1" height="7" fill="#bcbcbc"/>
    <path d="M9.500 2 V7 M7.500 5.500 L9.500 7.500 L11.500 5.500" fill="none" stroke="#9a9a9a" stroke-width="1"/>
    <rect x="6" y="9" width="7" height="7" fill="#9a9a9a"/>
  </svg>
  <svg style="left:499px;top:882px" width="18" height="16" viewBox="0 0 18 16">
    <rect x="1" y="0" width="6" height="6.500" fill="#9a9a9a"/>
    <path d="M6.500 7 V16" stroke="#9a9a9a" stroke-width="1" stroke-dasharray="2 1"/>
    <path d="M9.500 6.500 H16.500 M10.500 6.500 L11 15.500 H15 L15.500 6.500 M11.500 5.500 H14.500 M12.300 8 V14 M13.700 8 V14" fill="#f4f4f4" stroke="#c4c4c4" stroke-width="1"/>
  </svg>
  <svg style="left:527px;top:882px" width="16" height="16" viewBox="0 0 16 16">
    <path d="M3.500 0 V12.500 H16 M0 3.500 H12.500 V16" fill="none" stroke="#a4a4a4" stroke-width="1.200"/>
    <rect x="5.500" y="5.500" width="5" height="5" fill="#9a9a9a"/>
  </svg>
  <svg style="left:553px;top:882px" width="17" height="16" viewBox="0 0 17 16">
    <rect x="4" y="0" width="7" height="6.500" fill="#9a9a9a"/>
    <rect x="0" y="9" width="3" height="7" fill="#d0d0d0"/><rect x="10.500" y="9" width="6" height="7" fill="#d0d0d0"/>
    <path d="M7 8 V13 M5 11.500 L7 13.500 L9 11.500" fill="none" stroke="#9a9a9a" stroke-width="1"/>
  </svg>
  <div class="vs" style="left:579px"></div>
  <svg style="left:589px;top:882px" width="17" height="16" viewBox="0 0 17 16">
    <path d="M0.500 3.500 H5 M0.500 12.500 H5 M2 3.500 V12.500 M11 3.500 H16.500 M11 12.500 H16.500 M15 3.500 V12.500 M11.500 6 H14 M11.500 10 H14 M2.500 6 H4.500 M2.500 10 H4.500" fill="none" stroke="#a4a4a4" stroke-width="1.200"/>
    <path d="M8 0.500 V15.500" stroke="#a4a4a4" stroke-width="1" stroke-dasharray="1 1"/>
  </svg>
  <svg style="left:616px;top:882px" width="17" height="16" viewBox="0 0 17 16">
    <path d="M0.500 3.500 H5 M0.500 12.500 H5 M2 3.500 V12.500 M11 3.500 H16.500 M11 12.500 H16.500 M15 3.500 V12.500 M11.500 6 H14 M11.500 10 H14 M2.500 6 H4.500 M2.500 10 H4.500" fill="none" stroke="#a4a4a4" stroke-width="1.200"/>
    <path d="M5.500 8 H9.500 M8 6.300 L9.800 8 L8 9.700" fill="none" stroke="#a4a4a4" stroke-width="1"/>
  </svg>
  <svg style="left:643px;top:882px" width="16" height="16" viewBox="0 0 16 16">
    <circle cx="10.800" cy="3.300" r="1.600" fill="#a4a4a4"/>
    <path d="M4.500 5.500 L8.500 4.500 L10 7 L13.500 7.500 M8.500 4.500 L7.200 9 L9.800 11 L9.300 14.500 M7.200 9 L5.500 11.500 L2.500 11.500" fill="none" stroke="#a4a4a4" stroke-width="1.500" stroke-linejoin="round"/>
    <path d="M0 8.500 H3 M0 15.500 H6" stroke="#a4a4a4" stroke-width="1"/>
    <path d="M13.500 0 V3 M12 1.500 H15" stroke="#a4a4a4" stroke-width="0.800"/>
  </svg>
  <svg style="left:669px;top:882px" width="16" height="16" viewBox="0 0 16 16">
    <rect x="0" y="5" width="1.300" height="6" fill="#a4a4a4"/>
    <path d="M2.500 5 L8.500 0 V16 L2.500 11 Z" fill="#a4a4a4"/>
    <path d="M10.500 5 A3.300 3.300 0 0 1 10.500 11 M10.500 2 A6.300 6.300 0 0 1 10.500 14" fill="none" stroke="#a4a4a4" stroke-width="1.300"/>
  </svg>
  <div class="arr" style="left:692px;top:888px;border-top-color:#b4b4b4"></div>
  <svg style="left:707px;top:882px" width="16" height="16" viewBox="0 0 16 16"><rect x="0.500" y="0.500" width="15" height="15" fill="#f3f3f3" stroke="#a9a9a9"/><path d="M2.500 13.500 L13.500 5 V13.500 Z" fill="#9a9a9a"/></svg>
  <svg style="left:734px;top:882px" width="16" height="16" viewBox="0 0 16 16"><rect x="0.500" y="0.500" width="15" height="15" fill="#f3f3f3" stroke="#a9a9a9"/><path d="M2.500 13.500 V5 L13.500 13.500 Z" fill="#9a9a9a"/></svg>
  <svg style="left:761px;top:882px" width="14" height="16" viewBox="0 0 14 16"><path d="M1 10 V16 M4 7 V16 M7 4 V16 M10 0 V16 M13 7 V16" stroke="#a4a4a4" stroke-width="1.500"/></svg>
  <div class="arr" style="left:783px;top:888px;border-top-color:#b4b4b4"></div>
  <svg style="left:800px;top:882px" width="14" height="16" viewBox="0 0 14 16"><path d="M0 1.500 H9" stroke="#a4a4a4" stroke-width="1"/><path d="M2 7 V16 M5 3 V16 M8 10 V16" stroke="#a4a4a4" stroke-width="1.500"/><rect x="11.500" y="0" width="1.500" height="1.500" fill="#a4a4a4"/></svg>
  <div class="vs" style="left:823px"></div>
  <div style="left:833px;top:884px;width:16px;height:12px;background:#3cae46"></div>
  <div class="t" style="left:833px;top:882px;width:16px;text-align:center;font-size:11px;font-weight:bold;color:#fff;letter-spacing:-0.500px;text-indent:-0.500px">CC</div>
  <div class="vs" style="left:858px"></div>
  <svg style="left:868px;top:882px" width="17" height="16" viewBox="0 0 17 16">
    <path d="M0.500 3.500 H6 V6.500 H0.500 Z M0.500 9.500 H6 V12.500 H0.500 Z M10 3.500 H16 V6.500 H10 Z M10 9.500 H16 V12.500 H10 Z" fill="none" stroke="#aaaaaa" stroke-width="1"/>
    <path d="M8 0.500 V15.500" stroke="#aaaaaa" stroke-width="1" stroke-dasharray="1.500 1"/>
  </svg>
  <div class="arr" style="left:901px;top:888px"></div>
  <div style="left:913px;top:880px;width:1px;height:22px;background:#dcdcdc"></div>
  <div style="left:922px;top:885px;width:16px;height:12px;background:#3cae46"></div>
  <div class="t" style="left:922px;top:883px;width:16px;text-align:center;font-size:11px;font-weight:bold;color:#fff;letter-spacing:-0.500px;text-indent:-0.500px">CC</div>
  <div class="vs" style="left:947px"></div>
  <svg style="left:957px;top:883px" width="17" height="16" viewBox="0 0 17 16">
    <path d="M0.500 3.500 H6.500 V6.500 H0.500 Z M0.500 9.500 H6.500 V12.500 H0.500 Z M10 3.500 H16 V6.500 H10 Z M10 9.500 H16 V12.500 H10 Z" fill="#fff" stroke="#1e73be" stroke-width="1.100"/>
    <path d="M8.200 1 V15" stroke="#f0562a" stroke-width="1" stroke-dasharray="1.500 1"/>
    <path d="M8.200 0 L9.700 1.700 H6.700 Z M8.200 16 L9.700 14.300 H6.700 Z" fill="#f0562a"/>
  </svg>
  <div class="vs" style="left:982px"></div>
  <svg style="left:992px;top:883px" width="16" height="16" viewBox="0 0 16 16">
    <path d="M4.600 8.500 L9 12.200 L4.600 16 L0.200 12.200 Z" fill="#27a5ae"/>
    <path d="M5.500 3.300 H9.500 A4.800 4.800 0 0 1 10.500 12.700" fill="none" stroke="#6e6e6e" stroke-width="1.200"/>
    <path d="M8 0.800 L5.300 3.300 L8 5.800" fill="none" stroke="#6e6e6e" stroke-width="1.200"/>
  </svg>
  <svg style="left:1020px;top:885px" width="13" height="13" viewBox="0 0 13 13"><path d="M6.300 0.400 L12.200 6.300 L6.300 12.200 L0.400 6.300 Z" fill="#27a5ae"/></svg>
  <svg style="left:1046px;top:883px" width="17" height="16" viewBox="0 0 17 16">
    <path d="M11.800 8.500 L16.200 12.200 L11.800 16 L7.400 12.200 Z" fill="#27a5ae"/>
    <path d="M10.500 3.300 H6.500 A4.800 4.800 0 0 0 5.500 12.700" fill="none" stroke="#6e6e6e" stroke-width="1.200"/>
    <path d="M8 0.800 L10.700 3.300 L8 5.800" fill="none" stroke="#6e6e6e" stroke-width="1.200"/>
  </svg>
  <div class="arr" style="left:1077px;top:890px"></div>
  <!-- pin / close -->
  <svg style="left:1553px;top:886px" width="10" height="9" viewBox="0 0 10 9"><path d="M0 4.500 H3.500 M3.500 1 V8 M3.500 2.500 H9.500 V5.500 H3.500 M3.500 6.500 H9.500" fill="none" stroke="#111" stroke-width="1"/></svg>
  <svg style="left:1576px;top:886px" width="10" height="10" viewBox="0 0 10 10"><path d="M1.200 1.200 L8.800 8.800 M8.800 1.200 L1.200 8.800" stroke="#111" stroke-width="2"/></svg>

  <!-- rows -->
  <div style="left:1px;top:933px;width:1594px;height:1px;background:#c6c6c6"></div>
  <div style="left:1px;top:958px;width:1594px;height:1px;background:#c6c6c6"></div>
  <div style="left:1px;top:980px;width:1594px;height:1px;background:#c6c6c6"></div>
  <div style="left:1px;top:1002px;width:1594px;height:1px;background:#c6c6c6"></div>
  <div style="left:200px;top:909px;width:1px;height:106px;background:#c6c6c6"></div>
  <div style="left:154px;top:912px;width:1px;height:17px;background:#d2d2d2"></div>
  <div class="t" style="left:17px;top:912px;font-size:12px;color:#111">主时间轴</div>
  <div class="t" style="left:17px;top:940px;font-size:12px;color:#111">幻灯片</div>
  <div class="t" style="left:17px;top:962px;font-size:12px;color:#111">文本占位符_2</div>
  <div class="t" style="left:17px;top:984px;font-size:12px;color:#111">标题占位符_1</div>
  <svg style="left:140px;top:917px" width="11" height="7" viewBox="0 0 11 7"><path d="M0 0 H10.500 L5.250 6.800 Z" fill="#707070"/></svg>
  <!-- eye + lock header -->
  <svg style="left:161px;top:915px" width="17" height="12" viewBox="0 0 17 12"><path d="M3 4 C6 0 12 0 16 4.500 C13 8 8 9 5 7 Z" fill="#c4c4c4"/><path d="M0.800 6 C4 1 11 1 14.200 6 C11 11 4 11 0.800 6 Z" fill="#8a8a8a"/><circle cx="7.500" cy="6" r="2.600" fill="#efefef"/><circle cx="7.500" cy="6" r="1.300" fill="#8a8a8a"/></svg>
  <svg style="left:183px;top:914px" width="13" height="13" viewBox="0 0 13 13"><path d="M5.500 6 V3.500 A2.500 2.500 0 0 1 10.500 3.500 V10" fill="none" stroke="#c4c4c4" stroke-width="1.500"/><path d="M2.500 6 V4 A2.500 2.500 0 0 1 7.500 4 V6" fill="none" stroke="#8a8a8a" stroke-width="1.500"/><rect x="1" y="6" width="8" height="6" fill="#8a8a8a"/><rect x="4.300" y="8" width="1.400" height="2.200" fill="#efefef"/></svg>
  <!-- row eye/lock -->
  <svg style="left:161px;top:964px" width="15" height="11" viewBox="0 0 15 11"><path d="M0.800 5.500 C4 0.500 11 0.500 14.200 5.500 C11 10.500 4 10.500 0.800 5.500 Z" fill="#8a8a8a"/><circle cx="7.500" cy="5.500" r="2.600" fill="#efefef"/><circle cx="7.500" cy="5.500" r="1.300" fill="#8a8a8a"/></svg>
  <svg style="left:183px;top:963px" width="13" height="12" viewBox="0 0 13 12"><path d="M7.500 5.500 V3.500 A2.300 2.300 0 0 1 12 3.500 V4.500" fill="none" stroke="#8a8a8a" stroke-width="1.300"/><rect x="1" y="5.500" width="8" height="6" fill="#8a8a8a"/><rect x="4.300" y="7.500" width="1.400" height="2.200" fill="#efefef"/></svg>
  <svg style="left:161px;top:986px" width="15" height="11" viewBox="0 0 15 11"><path d="M0.800 5.500 C4 0.500 11 0.500 14.200 5.500 C11 10.500 4 10.500 0.800 5.500 Z" fill="#8a8a8a"/><circle cx="7.500" cy="5.500" r="2.600" fill="#efefef"/><circle cx="7.500" cy="5.500" r="1.300" fill="#8a8a8a"/></svg>
  <svg style="left:183px;top:985px" width="13" height="12" viewBox="0 0 13 12"><path d="M7.500 5.500 V3.500 A2.300 2.300 0 0 1 12 3.500 V4.500" fill="none" stroke="#8a8a8a" stroke-width="1.300"/><rect x="1" y="5.500" width="8" height="6" fill="#8a8a8a"/><rect x="4.300" y="7.500" width="1.400" height="2.200" fill="#efefef"/></svg>

  <!-- ruler ticks -->
  <div id="ticks" style="left:211px;top:921px;width:1384px;height:12px;background:
    repeating-linear-gradient(90deg,#bdbdbd 0 1px,transparent 1px 50px) 0 0/100% 12px no-repeat,
    repeating-linear-gradient(90deg,#bdbdbd 0 1px,transparent 1px 25px) 0 4px/100% 8px no-repeat,
    repeating-linear-gradient(90deg,#bdbdbd 0 1px,transparent 1px 5px) 0 8px/100% 4px no-repeat"></div>
  <!-- blocks -->
  <div style="left:211px;top:936px;width:151px;height:67px;background:#e7eafc;border:1px solid #ababab"></div>
  <div style="left:212px;top:958px;width:149px;height:1px;background:#ababab"></div>
  <div style="left:212px;top:980px;width:149px;height:1px;background:#ababab"></div>
  <div style="left:361px;top:933px;width:1px;height:25px;background:#f0101c"></div>
  <div style="left:361px;top:1003px;width:1px;height:12px;background:#f0101c"></div>
</div>
<div id="rl" class="abs sf" style="left:0;top:909px;width:1600px;height:20px;font-size:11.500px;color:#111">
  <div class="t" style="left:211px;top:0px">0:00</div>
  <div class="t c" style="left:261.5px;top:0px">0:01</div>
  <div class="t c" style="left:311.5px;top:0px">0:02</div>
  <div class="t c" style="left:361.5px;top:0px">0:03</div>
  <div class="t c" style="left:411.5px;top:0px">0:04</div>
  <div class="t c" style="left:461.5px;top:0px">0:05</div>
  <div class="t c" style="left:511.5px;top:0px">0:06</div>
  <div class="t c" style="left:561.5px;top:0px">0:07</div>
  <div class="t c" style="left:611.5px;top:0px">0:08</div>
  <div class="t c" style="left:661.5px;top:0px">0:09</div>
  <div class="t c" style="left:711.5px;top:0px">0:10</div>
  <div class="t c" style="left:761.5px;top:0px">0:11</div>
  <div class="t c" style="left:811.5px;top:0px">0:12</div>
  <div class="t c" style="left:861.5px;top:0px">0:13</div>
  <div class="t c" style="left:911.5px;top:0px">0:14</div>
  <div class="t c" style="left:961.5px;top:0px">0:15</div>
  <div class="t c" style="left:1011.5px;top:0px">0:16</div>
  <div class="t c" style="left:1061.5px;top:0px">0:17</div>
  <div class="t c" style="left:1111.5px;top:0px">0:18</div>
  <div class="t c" style="left:1161.5px;top:0px">0:19</div>
  <div class="t c" style="left:1211.5px;top:0px">0:20</div>
  <div class="t c" style="left:1261.5px;top:0px">0:21</div>
  <div class="t c" style="left:1311.5px;top:0px">0:22</div>
  <div class="t c" style="left:1361.5px;top:0px">0:23</div>
  <div class="t c" style="left:1411.5px;top:0px">0:24</div>
  <div class="t c" style="left:1461.5px;top:0px">0:25</div>
  <div class="t c" style="left:1511.5px;top:0px">0:26</div>
  <div class="t c" style="left:1561.5px;top:0px">0:27</div>
</div>
<!-- STATUS BAR -->
<div id="status">
  <div class="t" style="left:5px;top:4px;font-size:12px">幻灯片：1/1</div>
  <div class="t sf" style="left:1572.500px;top:2px;font-size:10px;font-weight:bold;letter-spacing:-0.700px">abc</div>
  <svg style="left:1577px;top:10px" width="13" height="11" viewBox="0 0 13 11"><path d="M1 5.200 L5 9.300 L12 0.500" fill="none" stroke="#fff" stroke-width="1.500"/></svg>
  <svg style="left:1620px;top:5px" width="13" height="13" viewBox="0 0 13 13" fill="#fff">
    <rect x="0" y="0" width="13" height="2"/><rect x="1" y="2" width="1.300" height="7"/><rect x="10.700" y="2" width="1.300" height="7"/><rect x="1" y="7.700" width="11" height="1.300"/>
    <rect x="4" y="4" width="5" height="1"/><rect x="6" y="9" width="1" height="3"/><rect x="4" y="12" width="5" height="1"/>
  </svg>
  <svg style="left:1646px;top:10px" width="9" height="5" viewBox="0 0 9 5"><path d="M0 0 H8.500 L4.250 4.300 Z" fill="#fff"/></svg>
  <div style="position:absolute;left:1663px;top:11px;width:8px;height:2px;background:#fff"></div>
  <div style="position:absolute;left:1677px;top:11.500px;width:119px;height:1px;background:#fff"></div>
  <div style="position:absolute;left:1722px;top:6px;width:4px;height:13px;background:#fff"></div>
  <div style="position:absolute;left:1736px;top:10px;width:1px;height:5px;background:#fff"></div>
  <svg style="left:1802px;top:8px" width="8" height="8" viewBox="0 0 8 8"><path d="M0 4 H8 M4 0 V8" stroke="#fff" stroke-width="1.600"/></svg>
  <div class="t" style="left:1824px;top:5px;font-size:12.500px">82%</div>
  <svg style="left:1866px;top:5px" width="14" height="14" viewBox="0 0 14 14">
    <rect x="0.600" y="0.600" width="12.800" height="12.800" fill="none" stroke="#fff" stroke-width="1.200"/>
    <path d="M7 2.300 L8.800 4.300 H5.200 Z M7 11.700 L8.800 9.700 H5.200 Z M2.300 7 L4.300 5.200 V8.800 Z M11.700 7 L9.700 5.200 V8.800 Z" fill="#fff"/>
  </svg>
</div>
<div id="lb"></div><div id="rb"></div>
</div>
</body>
</html>
